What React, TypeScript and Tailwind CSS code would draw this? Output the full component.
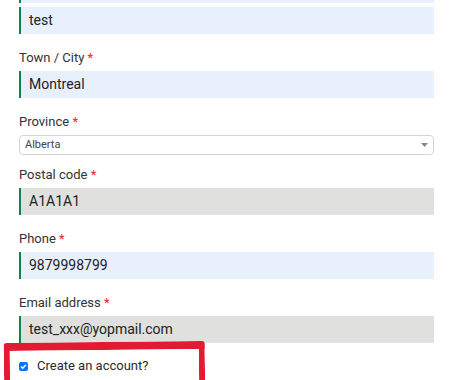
const fieldFont = { fontFamily: 'Roboto, "Noto Sans", sans-serif' };

function Label({ text }: { text: string }) {
  return (
    <label className="block h-5 mb-[3px] text-[13px] leading-5 text-[#333]">
      {text} <span className="text-[#e8262d]">*</span>
    </label>
  );
}

function TextInput({ value, tone }: { value: string; tone: "blue" | "grey" }) {
  return (
    <div
      className={
        "h-[27px] flex items-center pl-[8px] border-l-2 border-[#0f834d] text-[14px] text-[#222] " +
        (tone === "blue" ? "bg-[#e8f0fe]" : "bg-[#e0e0df]")
      }
    >
      {value}
    </div>
  );
}

function Field({ label, value, tone }: { label: string; value: string; tone: "blue" | "grey" }) {
  return (
    <div className="mb-[14px]">
      <Label text={label} />
      <TextInput value={value} tone={tone} />
    </div>
  );
}

export default function App() {
  return (
    <div className="relative w-[450px] h-[380px] overflow-hidden bg-white" style={fieldFont}>
      <div className="pl-[19px] pr-[16px] -mt-[24px]">
        <div className="mb-[4px]">
          <TextInput value="" tone="blue" />
        </div>
        <div className="mb-[14px]">
          <TextInput value="test" tone="blue" />
        </div>

        <Field label="Town / City" value="Montreal" tone="blue" />

        <div className="mb-[10px]">
          <Label text="Province" />
          <div className="h-[20px] flex items-center justify-between pl-[5px] pr-[5px] border border-[#d4d4d4] rounded-[4px] text-[11px] text-[#444]">
            <span>Alberta</span>
            <svg width="7" height="4" viewBox="0 0 7 4">
              <path d="M0 0h7L3.5 4z" fill="#888" />
            </svg>
          </div>
        </div>

        <Field label="Postal code" value="A1A1A1" tone="grey" />
        <Field label="Phone" value="9879998799" tone="blue" />
        <Field label="Email address" value="test_xxx@yopmail.com" tone="grey" />

        <div className="flex items-center gap-[9px] -mt-[1px] h-[20px]">
          <span className="w-[9px] h-[9px] rounded-[2px] bg-[#0075ff] flex items-center justify-center">
            <svg width="7" height="7" viewBox="0 0 7 7">
              <path d="M1 3.6l1.7 1.7L6 1.8" stroke="white" strokeWidth="1.4" fill="none" />
            </svg>
          </span>
          <span className="text-[13px] text-[#2a2a2a]">Create an account?</span>
        </div>
      </div>

      {/* hand-drawn highlight */}
      <div className="absolute left-[4px] top-[342px] w-[201px] h-[60px] border-x-[6px] border-t-[8px] border-[#e31b32] rounded-[3px] -rotate-[0.6deg]" />
    </div>
  );
}
